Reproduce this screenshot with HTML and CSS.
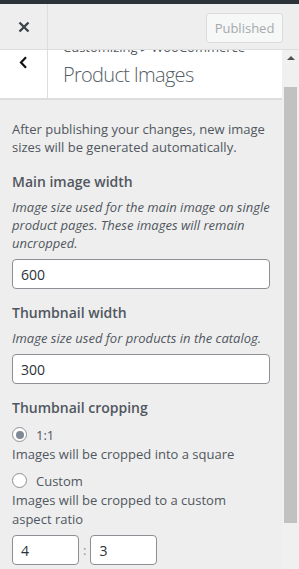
FILE: index.html
```html
<!DOCTYPE html>
<html lang="en">
<head>
    <meta charset="UTF-8">
    <meta name="viewport" content="width=device-width, initial-scale=1.0">
    <title>Customizing - Product Images</title>
    <link rel="stylesheet" href="styles.css">
</head>
<body>
    <div class="topbar"></div>

    <div class="header">
        <button class="close-btn" aria-label="Close">
            <svg width="12" height="12" viewBox="0 0 12 12">
                <path d="M1.5 1.5 L10.5 10.5 M10.5 1.5 L1.5 10.5" stroke="#3c434a" stroke-width="2.4" fill="none"/>
            </svg>
        </button>
        <div class="header-actions">
            <button class="publish-btn" disabled>Published</button>
        </div>
    </div>

    <div class="main">
        <div class="pane">
            <div class="section-head">
                <button class="back-btn" aria-label="Back">
                    <svg width="9" height="13" viewBox="0 0 9 13">
                        <path d="M7 1.2 L2 6.5 L7 11.8" stroke="#111" stroke-width="2.2" fill="none"/>
                    </svg>
                </button>
                <div class="section-title">
                    <span class="crumb">Customizing ▸ WooCommerce</span>
                    <h2>Product Images</h2>
                </div>
            </div>

            <div class="controls">
                <p class="notice">After publishing your changes, new image sizes will be generated automatically.</p>

                <div class="control">
                    <label class="control-label">Main image width</label>
                    <p class="desc">Image size used for the main image on single product pages. These images will remain uncropped.</p>
                    <input class="text-input" type="text" value="600">
                </div>

                <div class="control">
                    <label class="control-label">Thumbnail width</label>
                    <p class="desc">Image size used for products in the catalog.</p>
                    <input class="text-input" type="text" value="300">
                </div>

                <div class="control">
                    <label class="control-label">Thumbnail cropping</label>
                    <div class="radio-row">
                        <span class="radio checked"></span>
                        <span>1:1</span>
                    </div>
                    <p class="radio-desc">Images will be cropped into a square</p>
                    <div class="radio-row">
                        <span class="radio"></span>
                        <span>Custom</span>
                    </div>
                    <p class="radio-desc">Images will be cropped to a custom aspect ratio</p>
                    <div class="ratio">
                        <input class="small-input" type="text" value="4">
                        <span class="colon">:</span>
                        <input class="small-input" type="text" value="3">
                    </div>
                </div>
            </div>
        </div>

        <div class="scrollbar">
            <div class="arrow-up"></div>
            <div class="thumb"></div>
        </div>
    </div>
</body>
</html>
```

FILE: styles.css
```css
body {
    margin: 0;
    width: 299px;
    height: 569px;
    overflow: hidden;
    background: #eee;
    font-family: "Open Sans", "Noto Sans", sans-serif;
    font-size: 13px;
    color: #50575e;
}
.topbar {
    height: 4px;
    background: #2c3338;
}
.header {
    display: flex;
    height: 45px;
    border-bottom: 1px solid #ddd;
    background: #eee;
}
.close-btn {
    width: 48px;
    border: none;
    border-right: 1px solid #ddd;
    background: transparent;
    padding: 0;
    display: flex;
    align-items: center;
    justify-content: center;
}
.header-actions {
    flex: 1;
    display: flex;
    justify-content: flex-end;
    align-items: flex-start;
    padding: 9px 16px 0 0;
}
.publish-btn {
    width: 77px;
    height: 30px;
    font-family: inherit;
    font-size: 13px;
    color: #a7aaad;
    background: #f6f7f7;
    border: 1px solid #dcdcde;
    border-radius: 3px;
    padding: 0;
}
.main {
    display: flex;
    height: 519px;
}
.pane {
    flex: 1;
    overflow: hidden;
}
.section-head {
    display: flex;
    height: 48px;
    background: #fff;
    border-bottom: 2px solid #ddd;
    overflow: hidden;
}
.back-btn {
    width: 48px;
    border: none;
    border-right: 1px solid #ddd;
    background: transparent;
    padding: 6px 0 0 0;
    display: flex;
    align-items: flex-start;
    justify-content: center;
}
.section-title {
    padding-left: 15px;
    margin-top: -12px;
}
.crumb {
    display: block;
    line-height: 18px;
    color: #50575e;
}
.section-title h2 {
    margin: 6px 0 0 0;
    font-size: 20px;
    font-weight: 300;
    line-height: 26px;
    letter-spacing: -0.7px;
    color: #555d66;
}
.controls {
    padding: 20px 12px 0 12px;
}
.notice {
    margin: 0 0 16px 0;
    line-height: 18px;
}
.control {
    margin-bottom: 14px;
}
.control-label {
    display: block;
    font-size: 14px;
    font-weight: 600;
    line-height: 20px;
    margin-bottom: 6px;
}
.desc {
    margin: 0 0 7px 0;
    font-style: italic;
    line-height: 18px;
}
.text-input {
    display: block;
    box-sizing: border-box;
    width: 100%;
    height: 30px;
    border: 1px solid #8c8f94;
    border-radius: 4px;
    padding: 0 8px;
    font-family: inherit;
    font-size: 14px;
    color: #2c3338;
    background: #fff;
}
.radio-row {
    display: flex;
    align-items: center;
    gap: 9px;
    height: 21px;
}
.radio {
    box-sizing: border-box;
    width: 15px;
    height: 15px;
    border: 1px solid #8c8f94;
    border-radius: 50%;
    background: #fff;
    display: flex;
    align-items: center;
    justify-content: center;
}
.radio.checked::after {
    content: "";
    width: 8px;
    height: 8px;
    border-radius: 50%;
    background: #7e8993;
}
.radio-desc {
    margin: 0 0 6px 0;
    padding-right: 30px;
    line-height: 19px;
}
.ratio {
    display: flex;
    align-items: center;
    gap: 4px;
}
.small-input {
    box-sizing: border-box;
    width: 67px;
    height: 30px;
    border: 1px solid #8c8f94;
    border-radius: 4px;
    padding: 0 8px;
    font-family: inherit;
    font-size: 14px;
    color: #2c3338;
    background: #fff;
}
.colon {
    color: #8c8f94;
}
.scrollbar {
    width: 17px;
    background: #f0f0f0;
    display: flex;
    flex-direction: column;
    align-items: center;
}
.arrow-up {
    margin-top: 6px;
    width: 0;
    height: 0;
    border-left: 4px solid transparent;
    border-right: 4px solid transparent;
    border-bottom: 4px solid #505050;
}
.thumb {
    margin-top: 27px;
    width: 13px;
    height: 436px;
    background: #c1c1c1;
}
```
